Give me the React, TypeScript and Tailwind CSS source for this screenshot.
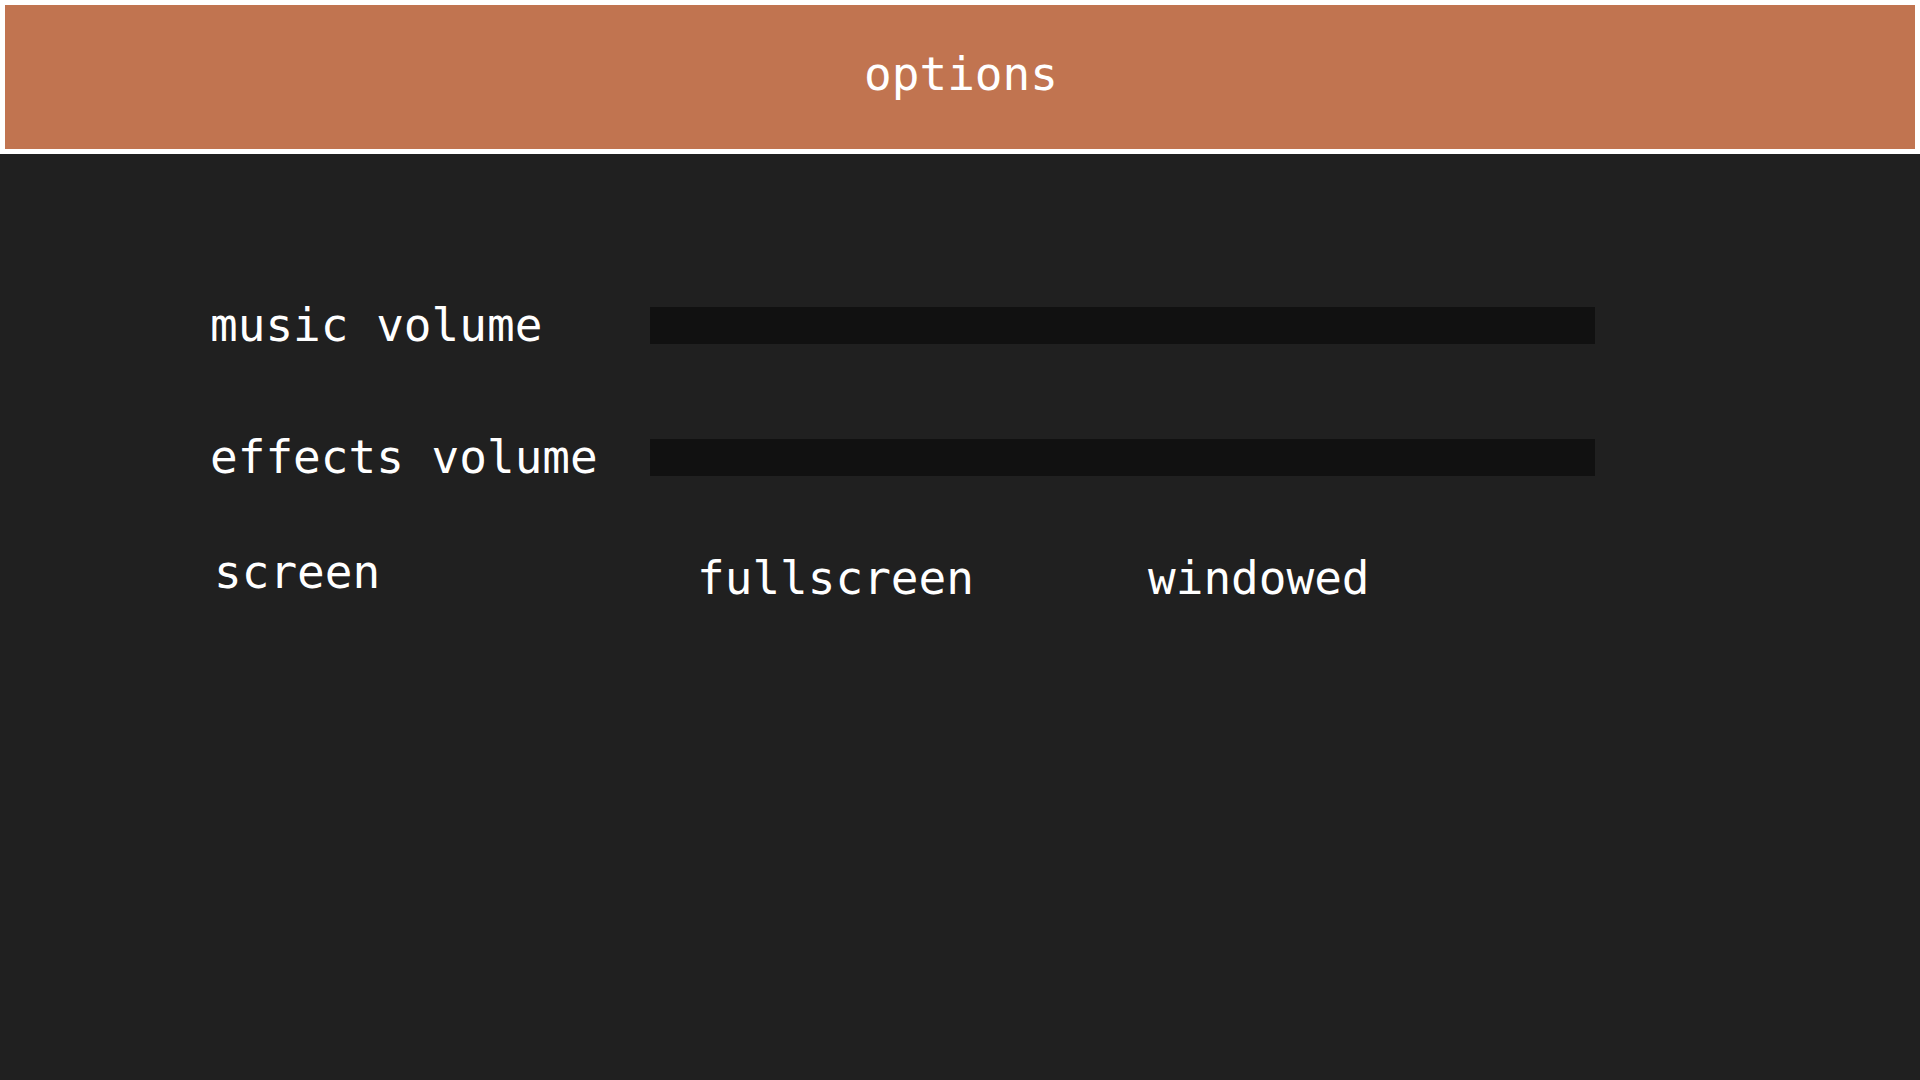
export default function App() {
    const sliders = ['music volume', 'effects volume'];

    return (
        <div className="min-h-screen flex flex-col bg-white font-['DejaVu_Sans_Mono',monospace] text-white">
            {/* Title bar */}
            <div className="p-[5px]">
                <div className="h-[144px] bg-[#c17450] flex items-center justify-center">
                    <span className="text-[46px] leading-none pb-[6px] pl-[2px]">options</span>
                </div>
            </div>

            {/* Settings */}
            <div className="flex-1 bg-[#202020] pl-[210px] pt-[153px] flex flex-col">
                {sliders.map((label, i) => (
                    <div key={label} className={`flex items-center h-[37px] ${i > 0 ? 'mt-[95px]' : ''}`}>
                        <div className="w-[440px] shrink-0 text-[46px] leading-[37px] whitespace-nowrap">
                            {label}
                        </div>
                        <div className="w-[945px] h-[37px] bg-[#111111]" />
                    </div>
                ))}

                <div className="flex items-start mt-[78px]">
                    <div className="w-[440px] shrink-0 pl-[4px] text-[46px] leading-[37px] whitespace-nowrap">
                        screen
                    </div>
                    <div className="flex pl-[47px] pt-[6px]">
                        <button className="w-[451px] text-left text-[46px] leading-[37px] whitespace-nowrap">
                            fullscreen
                        </button>
                        <button className="text-left text-[46px] leading-[37px] whitespace-nowrap">
                            windowed
                        </button>
                    </div>
                </div>
            </div>
        </div>
    );
}
